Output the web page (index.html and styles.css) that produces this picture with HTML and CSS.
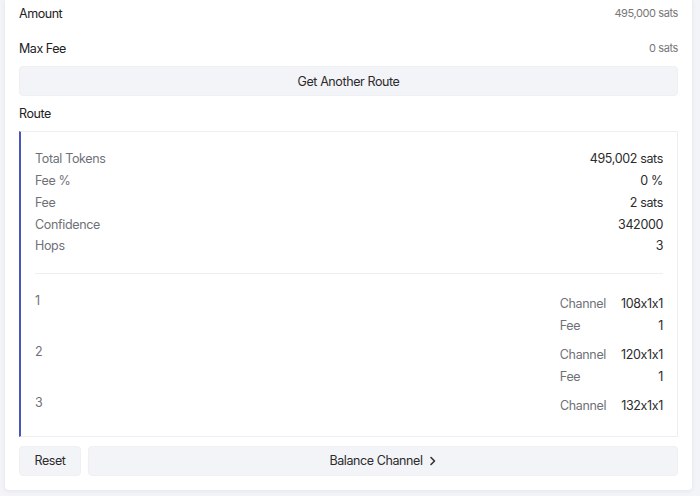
FILE: index.html
```html
<!DOCTYPE html>
<html>
<head>
<meta charset="utf-8">
<link rel="stylesheet" href="styles.css">
</head>
<body>
<div class="card">
  <div class="row top-row">
    <span class="label">Amount</span>
    <span class="small-val">495,000 sats</span>
  </div>
  <div class="row top-row second">
    <span class="label">Max Fee</span>
    <span class="small-val">0 sats</span>
  </div>
  <button class="btn wide">Get Another Route</button>
  <div class="row route-title"><span class="label">Route</span></div>
  <div class="route-box">
    <div class="stats">
      <div class="stat"><span class="k">Total Tokens</span><span class="v">495,002 sats</span></div>
      <div class="stat"><span class="k">Fee %</span><span class="v">0 %</span></div>
      <div class="stat"><span class="k">Fee</span><span class="v">2 sats</span></div>
      <div class="stat"><span class="k">Confidence</span><span class="v">342000</span></div>
      <div class="stat"><span class="k">Hops</span><span class="v">3</span></div>
    </div>
    <div class="divider"></div>
    <div class="hops">
      <div class="hop">
        <span class="hop-num">1</span>
        <div class="hop-grid">
          <span class="k">Channel</span><span class="v">108x1x1</span>
          <span class="k">Fee</span><span class="v">1</span>
        </div>
      </div>
      <div class="hop">
        <span class="hop-num">2</span>
        <div class="hop-grid">
          <span class="k">Channel</span><span class="v">120x1x1</span>
          <span class="k">Fee</span><span class="v">1</span>
        </div>
      </div>
      <div class="hop">
        <span class="hop-num">3</span>
        <div class="hop-grid">
          <span class="k">Channel</span><span class="v">132x1x1</span>
        </div>
      </div>
    </div>
  </div>
  <div class="actions">
    <button class="btn reset">Reset</button>
    <button class="btn wide balance">Balance Channel
      <svg class="chev" width="8" height="10" viewBox="0 0 8 10"><path d="M2 1.5 L5.5 5 L2 8.5" fill="none" stroke="#333" stroke-width="1.6" stroke-linecap="round" stroke-linejoin="round"/></svg>
    </button>
  </div>
</div>
</body>
</html>
```
FILE: styles.css
```css
* { box-sizing: border-box; }
html, body { margin: 0; padding: 0; }
body {
  background: #f3f4f8;
  font-family: Inter, "Noto Sans", sans-serif;
  font-size: 12.5px;
  font-variant-numeric: proportional-nums;
  color: #2b2b2b;
  width: 700px;
  height: 496px;
  overflow: hidden;
}
.card {
  margin: 0 8px 0 5px;
  background: #fff;
  padding: 0 14px 14px;
  border-radius: 0 0 4px 4px;
  box-shadow: 0 1px 4px rgba(40, 50, 80, 0.08);
}
.row {
  display: flex;
  justify-content: space-between;
  align-items: center;
  height: 26px;
}
.top-row.second { margin-top: 9px; }
.label { font-size: 12.5px; color: #222; letter-spacing: -0.45px; }
.small-val { font-size: 11px; color: #777; letter-spacing: -0.4px; }
.btn {
  display: flex;
  align-items: center;
  justify-content: center;
  border: 1px solid #eff0f4;
  background: #f3f4f8;
  border-radius: 4px;
  height: 30px;
  font-family: inherit;
  font-size: 12.5px;
  font-variant-numeric: proportional-nums;
  color: #2b2b2b;
  padding: 0;
  letter-spacing: -0.4px;
}
.btn.wide { width: 100%; margin-top: 5px; }
.route-title { margin-top: 4px; }
.route-box {
  margin-top: 5px;
  border: 1px solid #eceef3;
  border-left: 2px solid #4a56b9;
  padding: 16px 14px 19px 14px;
}
.stat {
  display: flex;
  justify-content: space-between;
  align-items: center;
  height: 21.75px;
}
.k { color: #6f7178; letter-spacing: -0.35px; }
.v { color: #2b2b2b; text-align: right; letter-spacing: -0.35px; }
.divider {
  height: 1px;
  background: #eceef3;
  margin: 16px 0 19px;
}
.hops { display: flex; flex-direction: column; gap: 7px; }
.hop {
  display: flex;
  justify-content: space-between;
  align-items: flex-start;
}
.hop-num { color: #6f7178; line-height: 16px; }
.hop-grid {
  display: grid;
  grid-template-columns: auto auto;
  column-gap: 15px;
  grid-auto-rows: 22px;
  align-items: center;
}
.actions {
  display: flex;
  gap: 7px;
  margin-top: 9px;
}
.actions .btn { margin-top: 0; height: 30px; }
.reset { width: 62px; flex: none; }
.balance { flex: 1; gap: 6px; }
.chev { display: block; }
```
